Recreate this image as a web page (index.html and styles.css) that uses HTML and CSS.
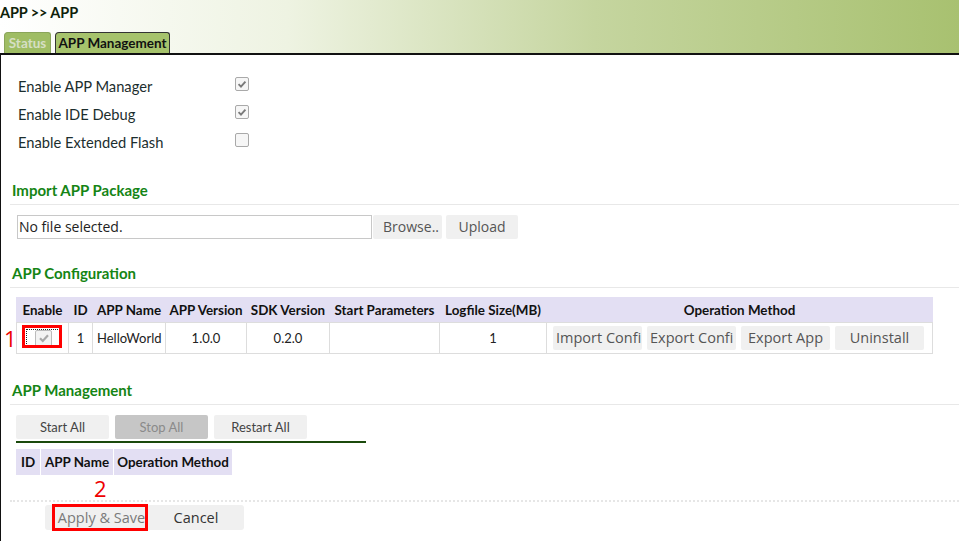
FILE: index.html
```html
<!DOCTYPE html>
<html>
<head>
<meta charset="utf-8">
<link rel="stylesheet" href="styles.css">
</head>
<body>
<div class="header">
  <div class="title">APP &gt;&gt; APP</div>
  <div class="tabs">
    <span class="tab tab-off">Status</span>
    <span class="tab tab-on">APP Management</span>
  </div>
</div>
<div class="content">
  <div class="options">
    <div class="opt"><span class="opt-label">Enable APP Manager</span><span class="cb"><svg viewBox="0 0 14 14" width="12" height="12"><path d="M3 7.2 L5.8 10 L11 4.2" fill="none" stroke="#7a7a7a" stroke-width="2.2"/></svg></span></div>
    <div class="opt"><span class="opt-label">Enable IDE Debug</span><span class="cb"><svg viewBox="0 0 14 14" width="12" height="12"><path d="M3 7.2 L5.8 10 L11 4.2" fill="none" stroke="#7a7a7a" stroke-width="2.2"/></svg></span></div>
    <div class="opt"><span class="opt-label">Enable Extended Flash</span><span class="cb"></span></div>
  </div>

  <h3 class="section">Import APP Package</h3>
  <div class="file-row">
    <div class="file-box">No file selected.</div>
    <button class="btn btn-browse">Browse..</button>
    <button class="btn btn-upload">Upload</button>
  </div>

  <h3 class="section">APP Configuration</h3>
  <table class="cfg">
    <thead>
      <tr>
        <th class="c-en">Enable</th><th class="c-id">ID</th><th class="c-name">APP Name</th><th class="c-ver">APP Version</th><th class="c-sdk">SDK Version</th><th class="c-par">Start Parameters</th><th class="c-log">Logfile Size(MB)</th><th class="c-op">Operation Method</th>
      </tr>
    </thead>
    <tbody>
      <tr>
        <td class="c-en"><span class="focus"><span class="cb cb-dis"><svg viewBox="0 0 14 14" width="14" height="14"><path d="M3 7.2 L5.8 10 L11 4.2" fill="none" stroke="#a8a8a8" stroke-width="2.2"/></svg></span></span></td>
        <td>1</td>
        <td class="left">HelloWorld</td>
        <td>1.0.0</td>
        <td>0.2.0</td>
        <td></td>
        <td>1</td>
        <td class="ops">
          <button class="btn op op-dim">Import Confi</button><button class="btn op">Export Confi</button><button class="btn op">Export App</button><button class="btn op">Uninstall</button>
        </td>
      </tr>
    </tbody>
  </table>

  <h3 class="section">APP Management</h3>
  <div class="mgmt-bar">
    <button class="btn mb">Start All</button>
    <button class="btn mb mb-dis">Stop All</button>
    <button class="btn mb">Restart All</button>
  </div>
  <table class="mgmt">
    <thead><tr><th class="m-id">ID</th><th class="m-name">APP Name</th><th class="m-op">Operation Method</th></tr></thead>
  </table>

  <div class="footer">
    <div class="btn-group">
      <button class="btn fb fb-apply">Apply &amp; Save</button><button class="btn fb fb-cancel">Cancel</button>
    </div>
  </div>
</div>

<div class="mark mark-num1">1</div>
<div class="mark mark-box1"></div>
<div class="mark mark-num2">2</div>
<div class="mark mark-box2"></div>
</body>
</html>
```

FILE: styles.css
```css
html, body {
  margin: 0;
  padding: 0;
  background: #fff;
}
body {
  position: relative;
  width: 959px;
  height: 541px;
  overflow: hidden;
  font-family: "Lato", "Liberation Sans", sans-serif;
  color: #1c2e2e;
}
.header {
  height: 53px;
  border-bottom: 2px solid #111;
  background: linear-gradient(to right, #ffffff 0%, #eef3e2 30%, #c5d59f 62%, #a8c170 100%);
  display: flex;
  flex-direction: column;
  justify-content: space-between;
}
.title {
  font-weight: bold;
  font-size: 14.5px;
  line-height: 16px;
  padding-top: 5px;
  color: #0f1f0a;
  letter-spacing: -0.1px;
}
.tabs {
  display: flex;
  gap: 4px;
  padding-left: 4px;
  align-items: flex-end;
}
.tab {
  display: block;
  font-weight: bold;
  font-size: 13.5px;
  line-height: 21px;
  height: 20px;
  border: 1px solid #6f8a45;
  border-bottom: none;
  border-radius: 4px 3px 0 0;
  white-space: nowrap;
}
.tab-off {
  width: 45px;
  background: #9fbd64;
  color: #d6dfc4;
  text-align: center;
  padding: 0;
  border-color: #8aa55a;
}
.tab-on {
  width: 113px;
  background: #a6c36c;
  color: #111;
  border-color: #333;
  padding: 0;
  text-align: center;
}
.content {
  border-left: 1px solid #111;
  padding-left: 9px;
  min-height: 486px;
}
.options {
  padding: 17px 0 0 8px;
}
.opt {
  display: flex;
  align-items: center;
  height: 28px;
}
.opt-label {
  width: 217px;
  font-size: 14.7px;
}
.cb {
  width: 14px;
  height: 14px;
  border: 1px solid #a9a9a9;
  border-radius: 2px;
  background: #f6f6f6;
  display: flex;
  align-items: center;
  justify-content: center;
  box-sizing: border-box;
  position: relative;
  top: -2px;
}
.cb svg { display: block; }
.section {
  margin: 23px 0 0 0;
  font-size: 15px;
  font-weight: bold;
  line-height: 20px;
  color: #158515;
  padding: 0 0 4px 2px;
  border-bottom: 1px solid #e8e8e8;
}
.options + .section { margin-top: 24px; }
.file-row {
  display: flex;
  margin: 10px 0 0 7px;
  height: 24px;
}
.file-box {
  width: 355px;
  height: 24px;
  box-sizing: border-box;
  border: 1px solid #c8c8c8;
  font-family: "Open Sans", sans-serif;
  font-size: 14px;
  line-height: 22px;
  padding-left: 1px;
  color: #222;
}
.btn {
  font-family: "Open Sans", sans-serif;
  background: #f0f0f0;
  border: none;
  border-radius: 2px;
  padding: 0;
  margin: 0;
  color: #555;
  font-size: 14px;
  height: 24px;
  line-height: 24px;
  white-space: nowrap;
  overflow: hidden;
}
.btn-browse { width: 69px; margin-left: 1px; text-align: right; padding-right: 3px; }
.btn-upload { width: 72px; margin-left: 4px; }
.file-row + .section { margin-top: 24px; }
.cfg {
  border-collapse: collapse;
  margin: 9px 0 0 6px;
  width: 917px;
  font-size: 12.5px;
}
.cfg th {
  background: #e3dff3;
  height: 24px;
  font-weight: bold;
  font-size: 13.4px;
  color: #111;
  padding: 0;
  border: 1px solid #e3dff3;
  border-left: 1px solid #fff;
  border-bottom: 1px solid #ddd;
  white-space: nowrap;
}
.cfg th:first-child { border-left-color: #e3dff3; }
.cfg td {
  height: 30px;
  border: 1px solid #ddd;
  text-align: center;
  padding: 0;
  color: #222;
  font-size: 13px;
  white-space: nowrap;
}
.cfg td.left { text-align: left; padding-left: 4px; }
.c-en { width: 51px; }
.c-id { width: 23px; }
.c-name { width: 72px; }
.c-ver { width: 80px; }
.c-sdk { width: 82px; }
.c-par { width: 109px; }
.c-log { width: 106px; }
.focus {
  display: flex;
  align-items: center;
  justify-content: center;
  width: 34px;
  height: 17px;
  margin: 0 auto;
  outline: 1px dotted #222;
  position: relative;
  left: 1px;
}
.cb-dis { width: 17px; height: 17px; background: #f3f3f3; border-color: #bbb; top: 0; }
.cfg td.ops {
  text-align: left;
  padding-left: 6px;
  font-size: 0;
}
.op {
  width: 89px;
  margin-right: 5px;
  font-size: 14.5px;
  vertical-align: middle;
  text-align: left;
  padding-left: 3px;
}
.op:last-child { text-align: center; padding-left: 0; }
.op:nth-child(3) { text-align: center; padding-left: 0; }
.cfg + .section { margin-top: 26px; }
.mgmt-bar {
  display: flex;
  gap: 6px;
  margin: 10px 0 0 6px;
  width: 350px;
  padding-bottom: 2px;
  border-bottom: 2px solid #1b4a0c;
}
.mb {
  width: 93px;
  font-family: "Lato", sans-serif;
  font-size: 13px;
  color: #444;
}
.mb-dis { background: #c6c6c6; color: #8a8a8a; }
.mgmt {
  border-collapse: collapse;
  margin: 6px 0 0 6px;
  font-size: 13.4px;
}
.mgmt th {
  background: #e3dff3;
  height: 26px;
  padding: 0;
  color: #111;
  border-left: 1px solid #fff;
  white-space: nowrap;
}
.mgmt th:first-child { border-left: none; }
.m-id { width: 24px; }
.m-name { width: 72px; }
.m-op { width: 118px; }
.footer {
  margin-top: 25px;
  border-top: 2px dotted #e6e6e6;
  padding: 3px 0 0 35px;
}
.btn-group {
  display: flex;
  width: 199px;
  height: 25px;
  background: #f0f0f0;
  border-radius: 3px;
}
.fb {
  height: 25px;
  line-height: 25px;
  font-size: 14.5px;
  background: transparent;
}
.fb-apply { width: 103px; color: #7a7a7a; padding-left: 10px; }
.fb-cancel { width: 96px; color: #333; }
.mark { position: absolute; }
.mark-num1 {
  left: 4px;
  top: 325px;
  color: #ee0000;
  font-family: "Open Sans", sans-serif;
  font-size: 22px;
  line-height: 26px;
}
.mark-box1 {
  left: 22px;
  top: 325px;
  width: 34px;
  height: 17px;
  border: 3px solid #ff0000;
}
.mark-num2 {
  left: 94px;
  top: 475px;
  color: #ee0000;
  font-family: "Open Sans", sans-serif;
  font-size: 22px;
  line-height: 26px;
}
.mark-box2 {
  left: 52px;
  top: 504px;
  width: 90px;
  height: 21px;
  border: 3px solid #ff0000;
}
```
